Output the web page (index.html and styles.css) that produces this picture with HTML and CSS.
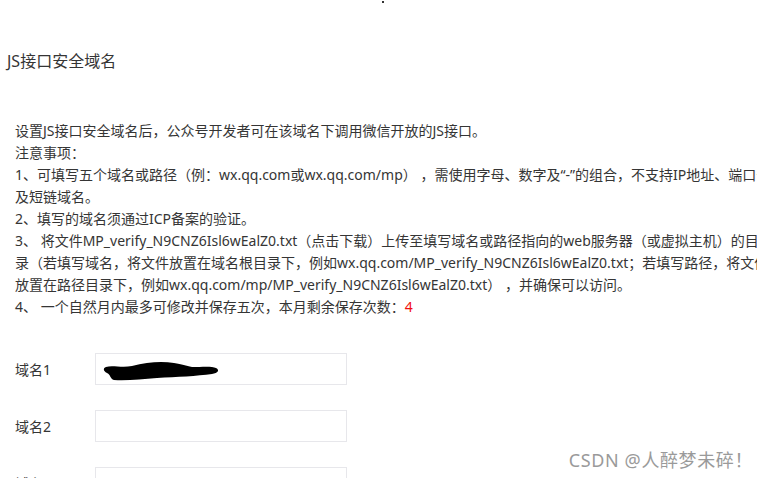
FILE: index.html
```html
<html>
    <head>
        <meta charset="utf-8">
        <link rel="stylesheet" href="styles.css">
    </head>
    <body>
        <div class="page">
            <div class="dot"></div>
            <h2 class="title">JS接口安全域名</h2>
            <div class="desc">
                <div>设置JS接口安全域名后，公众号开发者可在该域名下调用微信开放的JS接口。</div>
                <div>注意事项：</div>
                <div>1、可填写五个域名或路径（例：wx.qq.com或wx.qq.com/mp） ，需使用字母、数字及“-”的组合，不支持IP地址、端口号<br>及短链域名。</div>
                <div>2、填写的域名须通过ICP备案的验证。</div>
                <div>3、 将文件MP_verify_N9CNZ6Isl6wEalZ0.txt（点击下载）上传至填写域名或路径指向的web服务器（或虚拟主机）的目<br>录（若填写域名，将文件放置在域名根目录下，例如wx.qq.com/MP_verify_N9CNZ6Isl6wEalZ0.txt；若填写路径，将文件<br>放置在路径目录下，例如wx.qq.com/mp/MP_verify_N9CNZ6Isl6wEalZ0.txt） ，并确保可以访问。</div>
                <div>4、 一个自然月内最多可修改并保存五次，本月剩余保存次数：<span class="num">4</span></div>
            </div>
            <div class="form">
                <div class="row">
                    <label>域名1</label>
                    <div class="field">
                        <input type="text" spellcheck="false">
                        <svg class="mask" width="120" height="22" viewBox="0 0 120 22">
                            <path d="M4 7 C10 5 20 8 30 6 C45 2 60 1 72 3 C80 4 84 6 90 7 C100 7 110 6 114 8 C118 10 116 13 110 14 C95 16 75 17 55 18 C40 19 25 21 12 20 C8 19 9 15 5 13 C1 11 1 8 4 7 Z" fill="#000"/>
                        </svg>
                    </div>
                </div>
                <div class="row">
                    <label>域名2</label>
                    <div class="field"><input type="text" spellcheck="false"></div>
                </div>
                <div class="row">
                    <label>域名3</label>
                    <div class="field"><input type="text" spellcheck="false"></div>
                </div>
            </div>
            <div class="mark">CSDN @人醉梦未碎！</div>
        </div>
    </body>
</html>
```

FILE: styles.css
```css
:root {
    --c-text: #353535;
    --c-line: #e7e7eb;
    --c-warn: #f10f0f;
    --f-main: "Noto Sans", "Noto Sans CJK SC", sans-serif;
}

html, body {
    margin: 0;
    padding: 0;
    background: #fff;
    overflow: hidden;
}

body {
    width: 757px;
    height: 478px;
    font-family: var(--f-main);
    color: var(--c-text);
}

.page {
    position: relative;
    height: 478px;
}

.dot {
    position: absolute;
    left: 382px;
    top: 1px;
    width: 2px;
    height: 2px;
    background: #333;
}

.title {
    margin: 0;
    padding: 50px 0 0 7px;
    font-size: 16px;
    font-weight: normal;
    line-height: 22px;
}

.desc {
    padding: 48px 0 0 15px;
    font-size: 14px;
    line-height: 22px;
    white-space: nowrap;
}

.desc .num {
    color: var(--c-warn);
}

.form {
    padding: 35px 0 0 15px;
}

.form .row {
    display: flex;
    align-items: center;
    margin-bottom: 25px;
}

.form label {
    width: 80px;
    font-size: 14px;
}

.form .field {
    position: relative;
}

.form input {
    box-sizing: border-box;
    width: 252px;
    height: 32px;
    margin: 0;
    padding: 0 10px;
    border: 1px solid var(--c-line);
    outline: none;
    font-family: var(--f-main);
}

.form .mask {
    position: absolute;
    left: 7px;
    top: 7px;
}

.mark {
    position: absolute;
    right: 4px;
    bottom: 6px;
    font-size: 18px;
    color: #9a9a9a;
    text-shadow: 0 0 1px #fff;
    letter-spacing: 0.6px;
}
```
